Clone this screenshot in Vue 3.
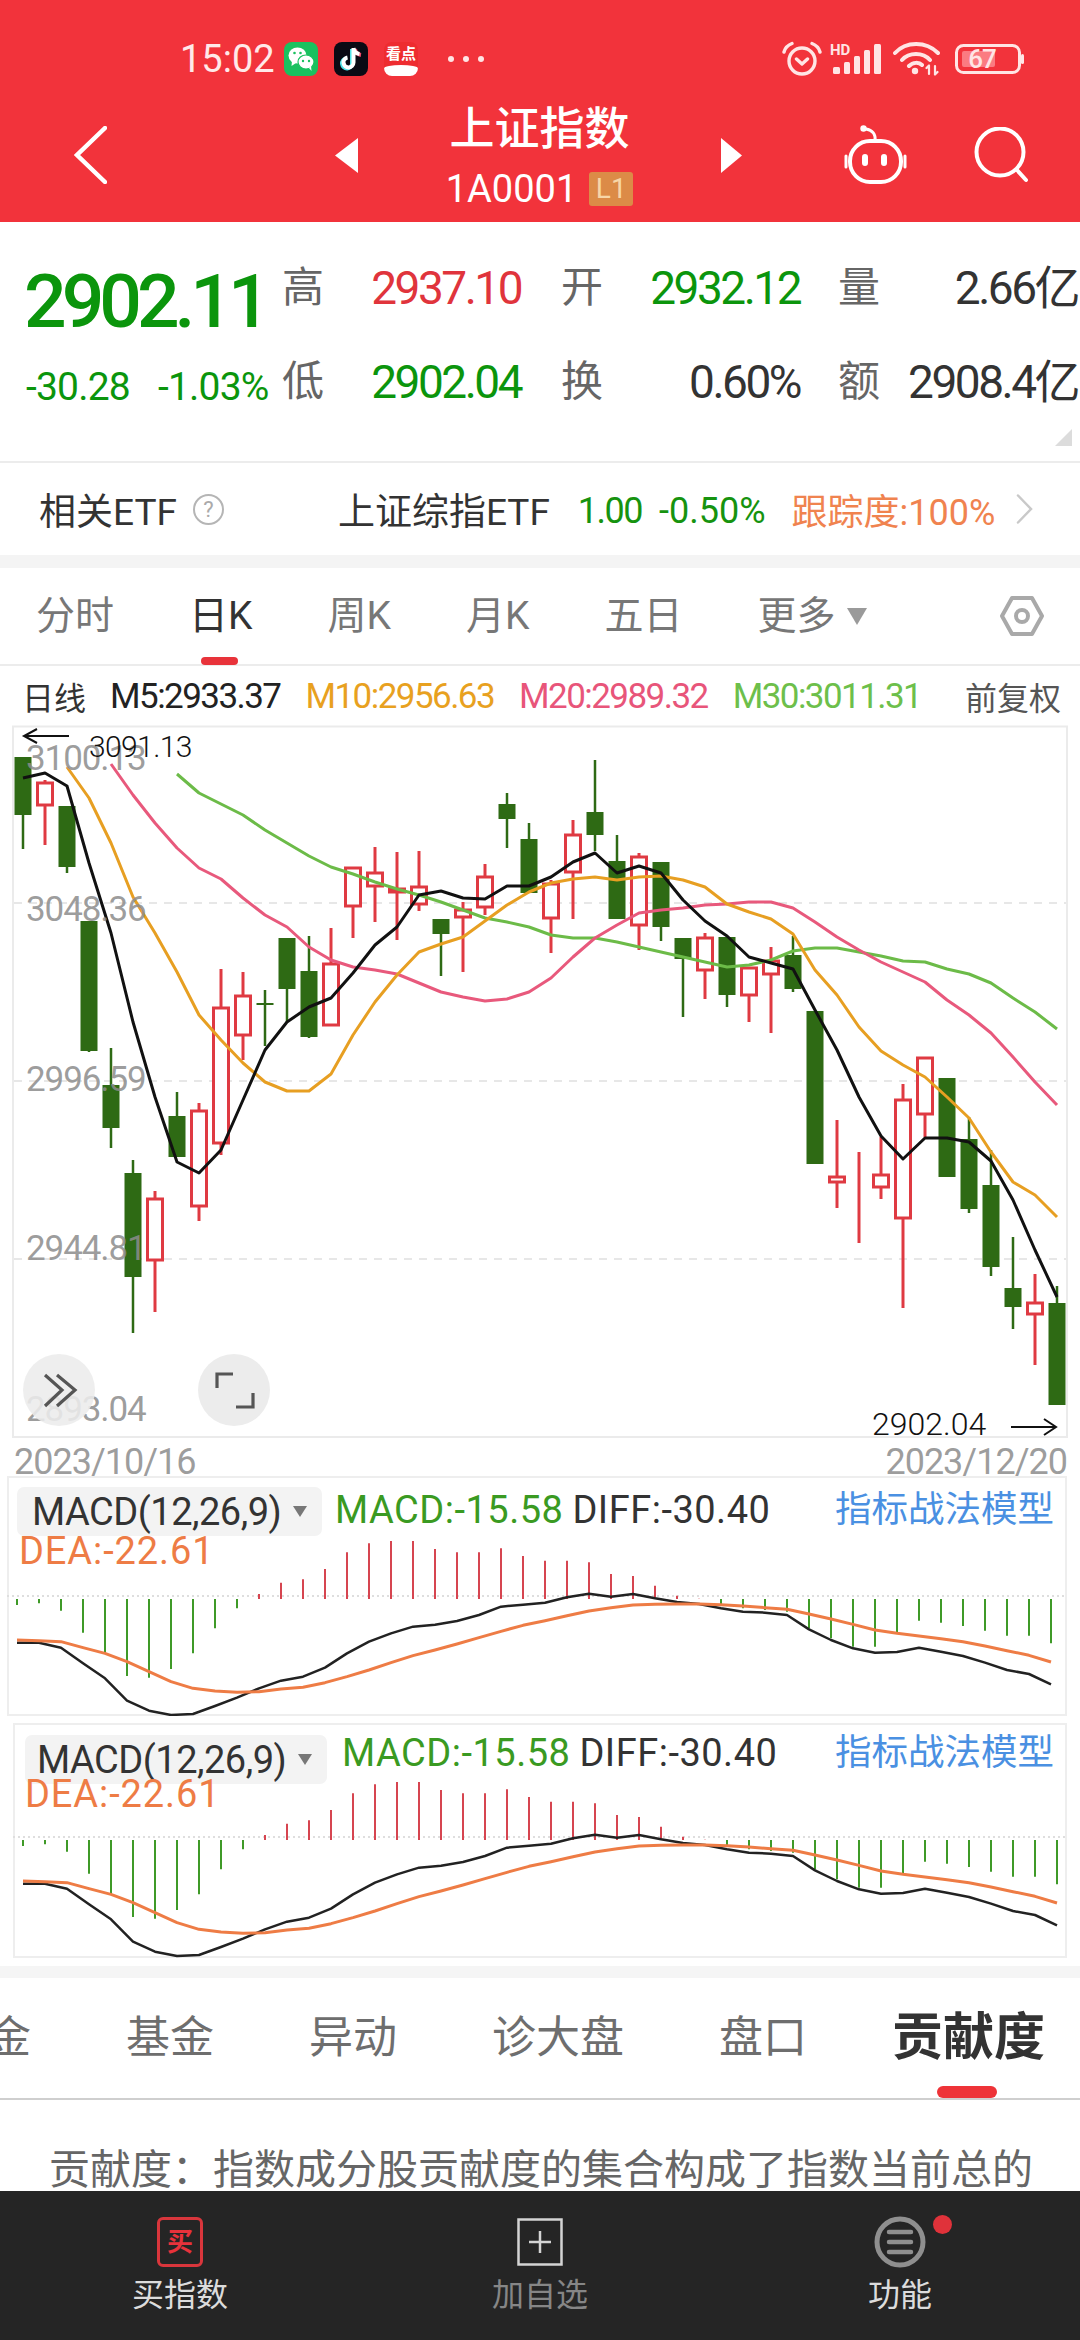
<script setup>
const S = 'g', R = 'r'
const raw = [
  [757,757,815,849,S],[780,782,806,845,R],[806,806,867,873,S],[921,921,1051,1052,S],
  [1048,1085,1128,1148,S],[1160,1173,1277,1333,S],[1191,1198,1261,1312,R],[1092,1116,1157,1157,S],
  [1103,1110,1207,1221,R],[969,1007,1144,1155,R],[972,995,1036,1060,R],[990,1003,1003,1046,S],
  [938,938,989,1022,S],[936,971,1037,1038,S],[928,963,1026,1026,R],[867,867,907,938,R],
  [847,872,887,922,R],[852,888,893,940,R],[851,886,905,911,R],[919,919,934,976,S],
  [902,909,918,972,R],[864,876,908,915,R],[793,804,819,848,S],[823,839,893,893,S],
  [880,883,919,953,R],[820,834,873,919,R],[760,812,835,851,S],[835,861,919,919,S],
  [853,856,926,950,R],[862,862,927,941,S],[938,938,959,1017,S],[933,937,971,999,R],
  [937,937,995,1007,S],[967,967,996,1022,R],[947,960,975,1033,R],[936,955,989,992,S],
  [1011,1011,1164,1164,S],[1120,1176,1183,1208,R],[1152,1187,1187,1243,R],[1137,1174,1188,1199,R],
  [1084,1099,1219,1308,R],[1057,1057,1115,1137,R],[1078,1078,1177,1177,S],[1117,1139,1209,1213,S],
  [1150,1185,1267,1276,S],[1237,1288,1307,1329,S],[1274,1302,1315,1365,R],[1286,1303,1405,1405,S]
]
const candles = raw.map((c, i) => ({ x: 23 + 22 * i, high: c[0], top: c[1], bottom: c[2], low: c[3], kind: c[4] }))

const toPts = (start, ys) => ys.map((y, i) => `${23 + 22 * (start + i)},${y}`).join(' ')
const ma5 = toPts(0, [778,773,786,863,933,1022,1097,1162,1173,1150,1100,1050,1022,1007,998,973,945,927,895,891,898,899,886,886,877,862,853,873,866,873,900,921,936,957,963,969,1010,1050,1097,1136,1159,1138,1138,1142,1161,1200,1250,1297])
const ma10 = toPts(2, [767,798,843,897,933,972,1015,1040,1063,1082,1091,1091,1074,1035,1002,975,952,944,937,921,905,892,883,879,877,880,877,876,880,887,904,912,919,934,970,995,1027,1051,1065,1077,1097,1118,1152,1182,1195,1217])
const ma20 = toPts(4, [764,795,823,848,868,879,898,915,927,947,960,967,970,974,983,992,997,1001,999,992,978,957,938,925,913,910,908,905,904,902,902,908,922,937,950,962,972,982,1000,1015,1033,1057,1082,1105])
const ma30 = toPts(7, [774,793,804,815,830,843,856,867,874,882,889,895,902,910,918,922,927,935,938,938,942,947,952,957,962,967,965,960,951,948,948,952,956,961,962,969,974,983,998,1012,1029])

const grids = [903, 1081, 1259]
const priceLabels = [
  { t: '3100.13', y: 770 }, { t: '3048.36', y: 921 }, { t: '2996.59', y: 1091 },
  { t: '2944.81', y: 1260 }, { t: '2893.04', y: 1421 }
]

const barTips = [405,400,422,488,550,618,623,597,550,475,415,372,338,328,297,247,220,213,213,237,247,247,235,258,272,272,277,312,318,347,377,386,405,415,420,425,475,505,530,530,488,452,458,468,482,497,497,520]
const diffZ = [518,518,533,580,625,692,722,735,732,708,683,655,632,620,593,550,515,490,470,464,453,435,410,404,398,382,371,380,372,385,396,402,415,425,428,435,478,510,535,548,546,533,545,558,578,600,612,643]
const deaZ = [510,512,515,533,550,575,605,635,655,663,667,665,657,652,638,620,600,578,557,540,522,503,484,466,452,437,423,413,405,403,402,402,404,408,413,418,432,447,463,480,490,498,506,515,528,542,556,576]
const zy = z => 1470 + z / 3
const bars = barTips.map((t, i) => ({ x: 17 + 22 * i, y: zy(t), up: t < 388 }))
const lineOf = arr => arr.map((z, i) => `${17 + 22 * i},${zy(z)}`).join(' ')
const diffPts = lineOf(diffZ)
const deaPts = lineOf(deaZ)

const panels = [
  { cls: 'panel-a', viewBox: '7 1476 1060 240', dx: 0, dy: 0 },
  { cls: 'panel-b', viewBox: '12.5 1723 1054.5 235', dx: 5.5, dy: 241 }
]

const tabs = ['分时', '日K', '周K', '月K', '五日', '更多']
const subTabs = ['金', '基金', '异动', '诊大盘', '盘口']
</script>

<template>
  <div class="page">
    <header class="head">
      <div class="status">
        <span class="time">15:02</span>
        <span class="app wechat">
          <svg viewBox="0 0 34 34" width="34" height="34">
            <ellipse cx="13.5" cy="13.5" rx="9" ry="8" fill="#fff" />
            <path d="M8 19 L7.5 24 L12 21 Z" fill="#fff" />
            <ellipse cx="22" cy="20" rx="8" ry="7" fill="#fff" stroke="#1ac15f" stroke-width="1.2" />
            <path d="M25 26 L27.5 29 L27 24 Z" fill="#fff" />
            <circle cx="10.5" cy="11" r="1.3" fill="#1ac15f" /><circle cx="16.5" cy="11" r="1.3" fill="#1ac15f" />
            <circle cx="19" cy="19" r="1.2" fill="#1ac15f" /><circle cx="25" cy="19" r="1.2" fill="#1ac15f" />
          </svg>
        </span>
        <span class="app tiktok">
          <svg viewBox="0 0 34 34" width="34" height="34" fill="none" stroke-width="4">
            <path d="M18 7 V21.5 A5 5 0 1 1 12 16.5" stroke="#4fe3e8" />
            <path d="M21 7 C21.5 10.5 23.5 12.5 27 13" stroke="#f04a6a" />
            <path d="M19.5 6 V20.5 A5 5 0 1 1 13.5 15.5 M19.5 6 C20 9.5 22 11.5 25.5 12" stroke="#fff" />
          </svg>
        </span>
        <span class="app kandian"><span class="kd-top">看点</span><span class="kd-bot"></span></span>
        <span class="dots"><i></i><i></i><i></i></span>
        <span class="status-right">
          <svg viewBox="0 0 40 36" width="40" height="36" fill="none" stroke="#ffe5e5" stroke-width="3.4" stroke-linecap="round" stroke-linejoin="round">
            <circle cx="20" cy="20" r="13" />
            <path d="M2 11 C3 7 6 4 10 2.5 M38 11 C37 7 34 4 30 2.5 M14.5 18 L20 23 L25.5 18" />
          </svg>
          <svg class="sig" viewBox="0 0 52 34" width="52" height="34">
            <text x="0" y="13" class="hd">HD</text>
            <rect x="3" y="25" width="7" height="7" rx="1.5" /><rect x="14" y="20" width="6" height="12" rx="1.5" />
            <rect x="24" y="14" width="6" height="18" rx="1.5" /><rect x="34" y="8" width="6" height="24" rx="1.5" />
            <rect x="44" y="2" width="7" height="30" rx="1.5" />
          </svg>
          <svg class="wifi" viewBox="0 0 47 34" width="47" height="34" fill="none" stroke="#ffe5e5" stroke-width="4" stroke-linecap="round">
            <path d="M2 11 C13 -1 33 -1 45 11 M9 18 C16 10 30 10 37 18 M16 24 C20 20 26 20 29 23" />
            <circle cx="22" cy="29" r="3.2" fill="#ffe5e5" stroke="none" />
            <path d="M36 32 V24 M33.5 26 L36 23.5 M42 24 V32 M44.5 30 L42 32.5" stroke-width="2.2" />
          </svg>
          <svg class="batt" viewBox="0 0 69 30" width="69" height="30">
            <rect x="1.5" y="1.5" width="63" height="27" rx="7" fill="none" stroke="#ffe5e5" stroke-width="3" />
            <rect x="7" y="7" width="33" height="16" rx="2" fill="#ff9aa0" opacity=".7" />
            <text x="27" y="24" class="batt-txt" text-anchor="middle">67</text>
            <rect x="66" y="10" width="3" height="10" rx="1.5" fill="#ffe5e5" />
          </svg>
        </span>
      </div>
      <nav class="nav">
        <svg class="back" viewBox="0 0 33 58" width="33" height="58" fill="none" stroke="#fff" stroke-width="4.5" stroke-linecap="round">
          <path d="M31 2 L3 29 L31 56" />
        </svg>
        <svg class="tri-l" viewBox="0 0 23 35" width="23" height="35"><path d="M23 0 V35 L0 17.5 Z" fill="#fff" /></svg>
        <div class="title-box">
          <div class="title">上证指数</div>
          <div class="sub"><span>1A0001</span><span class="badge">L1</span></div>
        </div>
        <svg class="tri-r" viewBox="0 0 21 35" width="21" height="35"><path d="M0 0 V35 L21 17.5 Z" fill="#fff" /></svg>
        <svg class="robot" viewBox="0 0 64 60" width="64" height="60" fill="none" stroke="#fff" stroke-width="4" stroke-linecap="round">
          <rect x="6" y="16" width="51" height="41" rx="20" />
          <path d="M31 16 C32 9 28 5 22 4" stroke-width="3" />
          <circle cx="19.5" cy="3.5" r="3.2" fill="#fff" stroke="none" />
          <path d="M21 32 V38 M40 32 V38" stroke-width="6" />
          <path d="M2 31 V42 M61 31 V42" stroke-width="3" />
        </svg>
        <svg class="search" viewBox="0 0 54 56" width="54" height="56" fill="none" stroke="#fff" stroke-width="4" stroke-linecap="round">
          <circle cx="26" cy="25" r="23.5" /><path d="M43 43 L52 53" />
        </svg>
      </nav>
    </header>

    <section class="quote">
      <div class="quote-left">
        <div class="big">2902.11</div>
        <div class="chg"><span>-30.28</span><span>-1.03%</span></div>
      </div>
      <div class="quote-grid">
        <span class="lb first">高</span><span class="val red">2937.10</span>
        <span class="lb">开</span><span class="val green">2932.12</span>
        <span class="lb">量</span><span class="val dark">2.66亿</span>
        <span class="lb first">低</span><span class="val green">2902.04</span>
        <span class="lb">换</span><span class="val dark">0.60%</span>
        <span class="lb">额</span><span class="val dark">2908.4亿</span>
      </div>
      <span class="corner"></span>
    </section>

    <section class="etf">
      <span class="etf-title">相关ETF</span>
      <span class="help">?</span>
      <span class="etf-name">上证综指ETF</span>
      <span class="etf-price">1.00</span>
      <span class="etf-chg">-0.50%</span>
      <span class="etf-track">跟踪度:100%</span>
      <svg class="etf-arrow" viewBox="0 0 17 30" width="17" height="30" fill="none" stroke="#c9c9c9" stroke-width="2.5" stroke-linecap="round">
        <path d="M2 1.5 L15 15 L2 28.5" />
      </svg>
    </section>

    <div class="gap-bar"></div>

    <section class="ktabs">
      <span v-for="(t, i) in tabs" :key="t" class="ktab" :class="{ on: i === 1 }">{{ t }}<i v-if="i === 1" class="ktab-line"></i></span>
      <span class="more-tri"></span>
      <svg class="hex" viewBox="0 0 44 42" width="44" height="42" fill="none" stroke="#a9a9a9" stroke-width="4" stroke-linejoin="round">
        <path d="M12 3 H32 L42 21 L32 39 H12 L2 21 Z" /><circle cx="22" cy="21" r="6" />
      </svg>
    </section>

    <section class="legend">
      <span class="lg-kind">日线</span>
      <span class="lg-m lg-m5">M5:2933.37</span>
      <span class="lg-m lg-m10">M10:2956.63</span>
      <span class="lg-m lg-m20">M20:2989.32</span>
      <span class="lg-m lg-m30">M30:3011.31</span>
      <span class="lg-adj">前复权</span>
    </section>

    <svg class="chart" viewBox="0 726 1080 750" width="1080" height="750">
      <rect x="13" y="726.5" width="1054" height="710.5" fill="#fff" stroke="#ebebeb" stroke-width="2" />
      <line v-for="g in grids" :key="g" x1="14" x2="1066" :y1="g" :y2="g" stroke="#dfdfdf" stroke-width="1.5" stroke-dasharray="8 7" />
      <g v-for="c in candles" :key="c.x">
        <template v-if="c.kind === 'g'">
          <line :x1="c.x" :x2="c.x" :y1="c.high" :y2="c.low" stroke="#2e6a14" stroke-width="2.5" />
          <rect :x="c.x - 8.5" :y="c.top" width="17" :height="Math.max(c.bottom - c.top, 2)" fill="#2e6a14" />
        </template>
        <template v-else>
          <line :x1="c.x" :x2="c.x" :y1="c.high" :y2="c.top" stroke="#df3a42" stroke-width="3" />
          <line :x1="c.x" :x2="c.x" :y1="c.bottom" :y2="c.low" stroke="#df3a42" stroke-width="3" />
          <rect :x="c.x - 7.5" :y="c.top + 1" width="15" :height="Math.max(c.bottom - c.top - 2, 0)" fill="#fff" stroke="#df3a42" stroke-width="3" />
        </template>
      </g>
      <polyline :points="ma30" class="ma" stroke="#6cbb48" />
      <polyline :points="ma20" class="ma" stroke="#e8597c" />
      <polyline :points="ma10" class="ma" stroke="#e79f22" />
      <polyline :points="ma5" class="ma" stroke="#111" />

      <text v-for="p in priceLabels" :key="p.t" x="26" :y="p.y" class="axis">{{ p.t }}</text>
      <text x="14" y="1474" class="axis date">2023/10/16</text>
      <text x="1067" y="1474" class="axis date" text-anchor="end">2023/12/20</text>

      <path d="M69 736 H24 M37 729 L24 736 L37 743" fill="none" stroke="#111" stroke-width="2" />
      <text x="89" y="757" class="hl hl-top">3091.13</text>
      <text x="872" y="1435" class="hl">2902.04</text>
      <path d="M1011 1427 H1056 M1044 1419 L1056 1427 L1044 1435" fill="none" stroke="#111" stroke-width="2" />

      <circle cx="59" cy="1390" r="36" fill="#ececec" fill-opacity=".88" />
      <path d="M45 1375 L62 1390 L45 1406 M57 1375 L75 1390 L57 1406" fill="none" stroke="#555" stroke-width="3.2" />
      <circle cx="234" cy="1390" r="36" fill="#ececec" />
      <path d="M217 1388 V1374 H233 M236 1407 H253 V1393" fill="none" stroke="#555" stroke-width="3.2" />
    </svg>

    <section v-for="p in panels" :key="p.cls" class="macd" :class="p.cls">
      <svg class="macd-svg" :viewBox="p.viewBox" preserveAspectRatio="none">
        <g :transform="`translate(${p.dx} ${p.dy})`">
          <line x1="7" x2="1067" y1="1596" y2="1596" stroke="#dedede" stroke-width="2" stroke-dasharray="2 3" />
          <line v-for="b in bars" :key="b.x" :x1="b.x" :x2="b.x" :y1="1599" :y2="b.y" :stroke="b.up ? '#d64550' : '#3f9a28'" stroke-width="2" />
          <polyline :points="diffPts" class="macd-line" stroke="#222" />
          <polyline :points="deaPts" class="macd-line dea" stroke="#ee7c45" />
        </g>
      </svg>
      <div class="macd-head">
        <div class="dd"><span>MACD(12,26,9)</span><i class="dd-tri"></i></div>
        <span class="m-green">MACD:-15.58</span>
        <span class="m-dark">DIFF:-30.40</span>
        <span class="m-blue">指标战法模型</span>
      </div>
      <div class="m-dea">DEA:-22.61</div>
    </section>

    <div class="gap-bar low"></div>

    <section class="subtabs">
      <span v-for="t in subTabs" :key="t" class="subtab">{{ t }}</span>
      <span class="subtab on">贡献度<i class="sub-line"></i></span>
    </section>

    <section class="desc">贡献度：指数成分股贡献度的集合构成了指数当前总的</section>

    <footer class="bottom">
      <div class="bt">
        <span class="bt-ico buy"><b>买</b></span>
        <span class="bt-lb lit">买指数</span>
      </div>
      <div class="bt">
        <span class="bt-ico add">
          <svg viewBox="0 0 46 48" width="46" height="48" fill="none" stroke="#d4d4d4" stroke-width="2.5">
            <rect x="1.5" y="1.5" width="43" height="45" /><path d="M23 13 V35 M12 24 H34" />
          </svg>
        </span>
        <span class="bt-lb dim">加自选</span>
      </div>
      <div class="bt">
        <span class="bt-ico menu">
          <svg viewBox="0 0 52 52" width="52" height="52" fill="none" stroke="#8f8f8f">
            <circle cx="26" cy="26" r="23" stroke-width="5" />
            <path d="M15 16 H37 M15 26 H37 M15 36 H37" stroke-width="4.5" stroke-linecap="round" />
          </svg>
          <i class="dot"></i>
        </span>
        <span class="bt-lb lit">功能</span>
      </div>
    </footer>
  </div>
</template>

<style scoped>
.page {
  width: 1080px;
  height: 2340px;
  overflow: hidden;
  background: #fff;
  display: flex;
  flex-direction: column;
  font-family: Roboto, "Noto Sans CJK SC", sans-serif;
  color: #333;
}
.head { background: #f2333b; height: 222px; flex: none; color: #fff; }
.status { height: 100px; padding: 18px 0 0 180px; box-sizing: border-box; display: flex; align-items: center; }
.time { font-size: 38px; width: 104px; color: #ffe9e9; }
.app { width: 34px; height: 34px; border-radius: 8px; margin-right: 16px; overflow: hidden; display: block; flex: none; }
.app svg { display: block; }
.wechat { background: #1ac15f; }
.tiktok { background: #0a0a14; }
.kandian { background: #ee2c30; position: relative; margin-right: 30px; }
.kd-top { position: absolute; left: 0; right: 0; top: 2px; text-align: center; font-size: 15px; line-height: 20px; font-weight: 700; color: #fff; }
.kd-bot { position: absolute; left: 0; right: 0; bottom: 0; height: 11px; background: #fff; border-radius: 50% 50% 0 0 / 30% 30% 0 0; }
.dots { display: flex; gap: 9px; width: 334px; flex: none; }
.dots i { width: 6px; height: 6px; border-radius: 50%; background: #ffe5e5; }
.status-right { display: flex; align-items: center; margin-left: 0; }
.status-right svg { display: block; flex: none; }
.sig { margin-left: 8px; }
.sig rect { fill: #ffe5e5; }
.hd { font-size: 15px; font-weight: 700; fill: #ffe5e5; font-family: Roboto, sans-serif; }
.wifi { margin-left: 11px; }
.batt { margin-left: 15px; }
.batt-txt { font-size: 26px; font-weight: 500; fill: #ffe5e5; font-family: Roboto, sans-serif; letter-spacing: -1px; }

.nav { height: 110px; padding-left: 74px; display: flex; align-items: center; }
.back { flex: none; }
.tri-l { margin-left: 228px; flex: none; }
.title-box { width: 363px; align-self: flex-start; margin-top: 5px; display: flex; flex-direction: column; align-items: center; }
.title { font-size: 45px; line-height: 50px; font-weight: 500; }
.sub { display: flex; align-items: center; margin-top: 17px; font-size: 38px; line-height: 34px; height: 34px; }
.badge { margin-left: 12px; width: 44px; height: 34px; background: #dc8b47; color: #f7d6a8; border-radius: 3px; font-size: 28px; text-align: center; }
.tri-r { flex: none; }
.robot { margin-left: 102px; flex: none; }
.search { margin-left: 66px; flex: none; }

.quote { height: 241px; flex: none; position: relative; display: flex; border-bottom: 2px solid #ececec; box-sizing: border-box; }
.quote-left { width: 255px; margin-left: 27px; flex: none; color: #0b950c; }
.big { margin-top: 39px; font-size: 75px; line-height: 80px; font-weight: 500; letter-spacing: -5px; white-space: nowrap; margin-left: -3px; }
.chg { margin-top: 26px; font-size: 39px; line-height: 40px; display: flex; gap: 28px; letter-spacing: -.8px; margin-left: -1px; white-space: nowrap; }
.quote-grid {
  margin-top: 19px;
  display: grid;
  grid-template-columns: 42px 197px 82px 197px 80px 198px;
  grid-auto-rows: 94px;
  align-items: center;
}
.lb { font-size: 42px; color: #666; text-align: right; line-height: 50px; }
.val { font-size: 46px; text-align: right; letter-spacing: -2.5px; line-height: 50px; white-space: nowrap; }
.red { color: #e0343c; }
.green { color: #0b950c; }
.dark { color: #333; }
.corner { position: absolute; right: 8px; bottom: 15px; width: 0; height: 0; border-left: 17px solid transparent; border-bottom: 17px solid #dcdcdc; }

.etf { height: 92px; flex: none; display: flex; align-items: center; padding-left: 39px; font-size: 36px; white-space: nowrap; }
.etf-title { font-size: 37px; color: #333; }
.help { margin-left: 16px; width: 31px; height: 31px; box-sizing: border-box; border: 2px solid #b5b5b5; border-radius: 50%; font-size: 22px; line-height: 27px; text-align: center; color: #aaa; }
.etf-name { margin-left: 114px; font-size: 37px; color: #333; }
.etf-price { margin-left: 28px; color: #16930f; letter-spacing: -1.5px; padding-top: 4px; }
.etf-chg { margin-left: 17px; color: #16930f; padding-top: 4px; }
.etf-track { margin-left: 26px; color: #f0834f; }
.etf-arrow { margin-left: 21px; flex: none; }

.gap-bar { height: 13px; background: #f4f4f4; flex: none; }
.gap-bar.low { height: 12px; background: #f5f5f5; margin-top: 8px; }

.ktabs { height: 98px; flex: none; display: flex; align-items: center; padding: 0 36px; gap: 75px; font-size: 39px; color: #777; border-bottom: 2px solid #ececec; box-sizing: border-box; }
.ktab { position: relative; line-height: 50px; }
.ktab.on { color: #333; }
.ktab-line { position: absolute; left: 12px; width: 37px; bottom: -24px; height: 8px; border-radius: 4px; background: #e8333a; }
.more-tri { margin-left: -64px; width: 0; height: 0; border-left: 10px solid transparent; border-right: 10px solid transparent; border-top: 17px solid #9a9a9a; }
.hex { margin-left: auto; flex: none; }

.legend { height: 60px; flex: none; display: flex; align-items: center; padding: 0 19px 0 22px; font-size: 32px; gap: 25px; white-space: nowrap; }
.lg-kind { color: #333; margin-right: -1px; }
.lg-m { font-size: 35px; letter-spacing: -1.55px; }
.lg-m5 { color: #222; }
.lg-m10 { color: #e8a11f; }
.lg-m20 { color: #e8557a; }
.lg-m30 { color: #6dbf4b; }
.lg-adj { color: #555; margin-left: auto; }

.chart { display: block; flex: none; overflow: visible; }
.ma { fill: none; stroke-width: 3; stroke-linejoin: round; }
.axis { font-size: 35px; fill: #8c8c8c; fill-opacity: .85; font-family: Roboto, sans-serif; letter-spacing: -1.1px; }
.axis.date { font-size: 36px; letter-spacing: -1px; }
.hl { font-size: 32px; fill: #111; font-family: Roboto, sans-serif; font-weight: 300; }
.hl-top { font-size: 30px; letter-spacing: -.6px; }

.macd { position: relative; flex: none; box-shadow: inset 0 0 0 2px #eeeeee; box-sizing: border-box; font-size: 38px; white-space: nowrap; }
.panel-a { width: 1060px; height: 240px; margin: 0 0 7px 7px; padding: 11px 0 0 10px; }
.panel-b { width: 1054.5px; height: 235px; margin-left: 12.5px; padding: 12px 0 0 12.5px; }
.macd-svg { position: absolute; left: 0; top: 0; width: 100%; height: 100%; }
.macd-line { fill: none; stroke-width: 2.5; stroke-linejoin: round; }
.macd-line.dea { stroke-width: 3; }
.macd-head { position: relative; display: flex; align-items: flex-start; }
.dd { width: 305px; height: 49px; box-sizing: border-box; padding-left: 15px; background: #f3f3f3; border-radius: 7px; display: flex; align-items: center; color: #333; flex: none; letter-spacing: -.5px; }
.panel-b .dd { width: 302px; padding-left: 12px; }
.dd-tri { margin-left: 12px; width: 0; height: 0; border-left: 7.5px solid transparent; border-right: 7.5px solid transparent; border-top: 11px solid #777; }
.m-green, .m-dark, .m-blue { line-height: 46px; }
.panel-b .m-green, .panel-b .m-dark, .panel-b .m-blue { line-height: 36px; }
.m-green { margin-left: 13px; color: #3a9a22; letter-spacing: .5px; }
.panel-b .m-green { margin-left: 15px; }
.m-dark { margin-left: 9px; color: #333; letter-spacing: .5px; }
.m-blue { position: absolute; left: 818px; color: #4a90e2; font-size: 36.5px; }
.panel-b .m-blue { left: 810px; }
.m-dea { position: relative; margin-left: 2px; margin-top: 0; line-height: 30px; color: #ee7c45; letter-spacing: .9px; }
.panel-b .m-dea { margin-top: -5px; margin-left: 0; }

.subtabs { height: 122px; flex: none; display: flex; align-items: center; margin-left: -13px; gap: 95px; font-size: 44px; color: #6e6e6e; border-bottom: 2px solid #cfcfcf; box-sizing: border-box; white-space: nowrap; }
.subtab { position: relative; line-height: 60px; flex: none; }
.subtab.on { font-size: 51px; font-weight: 700; color: #333; margin-left: -10px; }
.sub-line { position: absolute; left: 45px; width: 60px; bottom: -30px; height: 12px; border-radius: 6px; background: #ee3338; }

.desc { height: 91px; flex: none; box-sizing: border-box; padding: 40px 0 0 49px; font-size: 41px; line-height: 60px; color: #666; overflow: hidden; white-space: nowrap; }

.bottom { height: 149px; flex: none; display: flex; background: #252525; padding-top: 26px; box-sizing: border-box; }
.bt { flex: 1; display: flex; flex-direction: column; align-items: center; }
.bt-ico { position: relative; height: 50px; display: flex; align-items: center; justify-content: center; }
.bt-ico svg { display: block; }
.buy { width: 46px; box-sizing: border-box; border: 3px solid #d9363c; border-radius: 6px; }
.buy b { color: #e8323b; font-size: 26px; line-height: 1; }
.dot { position: absolute; left: 59px; top: -2px; width: 19px; height: 19px; border-radius: 50%; background: #e0323a; }
.menu { width: 52px; }
.bt-lb { margin-top: 8px; font-size: 32px; line-height: 40px; }
.lit { color: #dcdcdc; }
.dim { color: #868686; }
</style>
